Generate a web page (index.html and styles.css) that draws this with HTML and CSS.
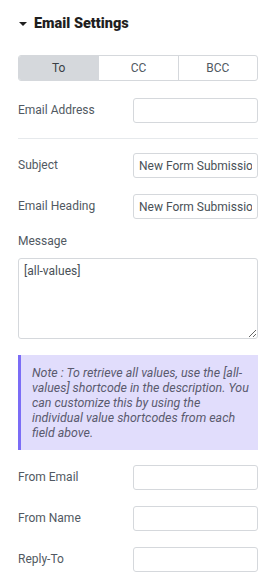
FILE: index.html
```html
<!DOCTYPE html>
<html>
<head>
<meta charset="utf-8">
<link rel="stylesheet" href="styles.css">
</head>
<body>
<div class="panel">
  <div class="section-head">
    <span class="caret"></span>
    <span class="section-title">Email Settings</span>
  </div>

  <div class="tabs">
    <div class="tab active">To</div>
    <div class="tab">CC</div>
    <div class="tab">BCC</div>
  </div>

  <div class="row first">
    <label class="label">Email Address</label>
    <input class="field" type="text" value="">
  </div>

  <hr class="divider">

  <div class="row after-divider">
    <label class="label">Subject</label>
    <input class="field" type="text" value="New Form Submission">
  </div>

  <div class="row">
    <label class="label">Email Heading</label>
    <input class="field" type="text" value="New Form Submission">
  </div>

  <div class="block">
    <label class="label">Message</label>
    <textarea class="area">[all-values]</textarea>
  </div>

  <div class="note">
    Note : To retrieve all values, use the [all-<br>values] shortcode in the description. You<br>can customize this by using the<br>individual value shortcodes from each<br>field above.
  </div>

  <div class="row after-note">
    <label class="label">From Email</label>
    <input class="field" type="text" value="">
  </div>

  <div class="row">
    <label class="label">From Name</label>
    <input class="field" type="text" value="">
  </div>

  <div class="row">
    <label class="label">Reply-To</label>
    <input class="field" type="text" value="">
  </div>
</div>
</body>
</html>
```

FILE: styles.css
```css
html, body {
  margin: 0;
  padding: 0;
  background: #ffffff;
}

body {
  font-family: Roboto, "Liberation Sans", Arial, sans-serif;
  color: #515962;
}

.panel {
  padding: 13px 16px 0 18px;
  display: flex;
  flex-direction: column;
}

.section-head {
  display: flex;
  align-items: center;
  gap: 7px;
  height: 20px;
  padding-left: 1px;
}

.caret {
  width: 0;
  height: 0;
  border-left: 4px solid transparent;
  border-right: 4px solid transparent;
  border-top: 4px solid #1f1f1f;
  margin-top: 1px;
}

.section-title {
  font-weight: 900;
  font-size: 14.5px;
  color: #1f1f1f;
}

.tabs {
  margin-top: 22px;
  display: grid;
  grid-template-columns: 1fr 1fr 1fr;
  height: 26px;
  border: 1px solid #d5d8dc;
  border-radius: 3px;
  overflow: hidden;
  box-sizing: border-box;
}

.tab {
  display: flex;
  align-items: center;
  justify-content: center;
  font-size: 12px;
  color: #515962;
  border-left: 1px solid #d5d8dc;
}

.tab:first-child {
  border-left: none;
}

.tab.active {
  background: #d5d8dc;
  color: #3a3f45;
}

.row {
  display: flex;
  align-items: center;
  justify-content: space-between;
  margin-top: 16px;
}

.row.first {
  margin-top: 17px;
}

.row.after-divider {
  margin-top: 14px;
}

.row.after-note {
  margin-top: 15px;
}

.label {
  font-size: 12px;
  color: #515962;
  line-height: 15px;
}

.field {
  width: 125px;
  height: 25px;
  box-sizing: border-box;
  border: 1px solid #d5d8dc;
  border-radius: 3px;
  padding: 0 5px;
  font-family: Roboto, "Liberation Sans", Arial, sans-serif;
  font-size: 12px;
  color: #495157;
  background: #ffffff;
  outline: none;
}

.divider {
  margin: 15px 0 0 0;
  border: none;
  border-top: 1px solid #e6e9ec;
  height: 0;
}

.block {
  margin-top: 15px;
  display: flex;
  flex-direction: column;
  gap: 9px;
}

.area {
  height: 81px;
  box-sizing: border-box;
  border: 1px solid #d5d8dc;
  border-radius: 3px;
  padding: 5px 5px;
  font-family: Roboto, "Liberation Sans", Arial, sans-serif;
  font-size: 12px;
  color: #495157;
  line-height: 15px;
  outline: none;
  resize: vertical;
}

.note {
  margin-top: 16px;
  background: #e1ddfc;
  border-left: 3px solid #7b6cf6;
  padding: 10px 6px 10px 11px;
  font-size: 12.4px;
  font-style: italic;
  line-height: 15px;
  color: #5a5a6e;
  white-space: nowrap;
}
```
